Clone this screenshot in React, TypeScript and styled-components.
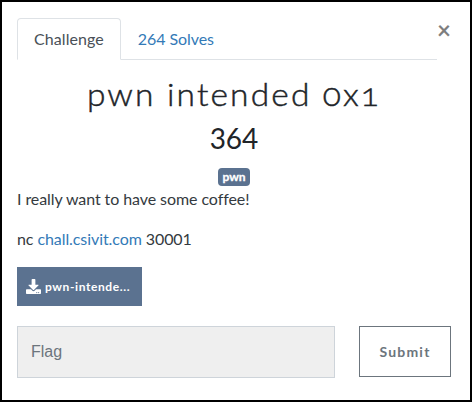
import React from 'react';
import styled, { createGlobalStyle } from 'styled-components';
import { FaDownload } from 'react-icons/fa';

const GlobalStyle = createGlobalStyle`
  *, *::before, *::after { box-sizing: border-box; }
  body { margin: 0; background: #fff; }
`;

const Modal = styled.main`
  width: 472px;
  height: 402px;
  border: 2px solid #000;
  padding: 16px 19px 0 15px;
  background: #fff;
  color: #212529;
  font: 400 16px/24px Lato, sans-serif;
  overflow: hidden;
`;

const Header = styled.header`
  display: flex;
  align-items: flex-start;
`;

const Tabs = styled.nav`
  display: flex;
  width: 420px;
  height: 42px;
  border-bottom: 1px solid #dee2e6;
`;

const Tab = styled.a<{ $active?: boolean }>`
  height: 42px;
  padding: 8px 16px;
  border: 1px solid transparent;
  border-color: ${p => (p.$active ? '#dee2e6 #dee2e6 #fff' : 'transparent')};
  border-radius: 4px 4px 0 0;
  background: ${p => (p.$active ? '#fff' : 'transparent')};
  color: ${p => (p.$active ? '#495057' : '#337ab7')};
  letter-spacing: ${p => (p.$active ? '0.08px' : '-0.08px')};
  white-space: nowrap;
`;

const Close = styled.button`
  width: 14px;
  height: 24px;
  padding: 0;
  border: 0;
  background: none;
  color: #000;
  opacity: 0.5;
  font: 700 24px/24px Lato, sans-serif;
`;

const Title = styled.h3`
  margin: 17px 0 0;
  height: 34px;
  text-align: center;
  font: 300 31px/34px Lato, sans-serif;
  font-variant-numeric: oldstyle-nums;
  letter-spacing: 2px;
  white-space: nowrap;
  transform: scaleX(1.08);
  -webkit-text-stroke: 0.45px #212529;
`;

const Points = styled.h4`
  margin: 10px 0 0;
  height: 34px;
  text-align: center;
  font: 400 28px/34px Lato, sans-serif;
`;

const Tags = styled.div`
  display: flex;
  justify-content: center;
  margin-top: 13px;
`;

const Badge = styled.span`
  height: 18px;
  padding: 0 4.5px;
  border-radius: 4px;
  background: #5b7290;
  color: #fff;
  font: 700 12px/18px Lato, sans-serif;
  -webkit-text-stroke: 0.3px #fff;
`;

const Description = styled.p`
  margin: 1px 0 0;
  color: #343a40;
  letter-spacing: -0.08px;
`;

const Connection = styled(Description)`
  margin-top: 16px;
`;

const Link = styled.a`
  color: #337ab7;
`;

const Download = styled.a`
  display: flex;
  align-items: center;
  gap: 4px;
  width: 125px;
  height: 39px;
  margin-top: 16px;
  padding-left: 9px;
  background: #5b7290;
  color: #fff;
  font: 700 12px/18px Lato, sans-serif;
  letter-spacing: 0.6px;
  white-space: nowrap;
  svg { margin-bottom: 1px; }
`;

const Form = styled.form`
  display: flex;
  align-items: flex-start;
  gap: 24px;
  margin-top: 20px;
`;

const Input = styled.input`
  width: 318px;
  height: 52px;
  padding: 0 13px;
  border: 1px solid #ced4da;
  border-radius: 0;
  background: #efefef;
  font: 400 16px/24px "Liberation Sans", Arial, sans-serif;
  &::placeholder { color: #6c757d; opacity: 1; }
`;

const Submit = styled.button`
  width: 92px;
  height: 51px;
  padding: 0;
  border: 1px solid #6c757d;
  background: #fff;
  color: #6c757d;
  font: 700 14px/21px Lato, sans-serif;
  letter-spacing: 1.2px;
`;

export default function App() {
  return (
    <>
      <GlobalStyle />
      <Modal>
        <Header>
          <Tabs>
            <Tab $active>Challenge</Tab>
            <Tab>264 Solves</Tab>
          </Tabs>
          <Close type="button" aria-label="Close">×</Close>
        </Header>
        <Title>pwn intended 0x1</Title>
        <Points>364</Points>
        <Tags><Badge>pwn</Badge></Tags>
        <Description>I really want to have some coffee!</Description>
        <Connection>nc <Link>chall.csivit.com</Link> 30001</Connection>
        <Download><FaDownload size={15} />pwn-intende...</Download>
        <Form>
          <Input placeholder="Flag" />
          <Submit type="button">Submit</Submit>
        </Form>
      </Modal>
    </>
  );
}
